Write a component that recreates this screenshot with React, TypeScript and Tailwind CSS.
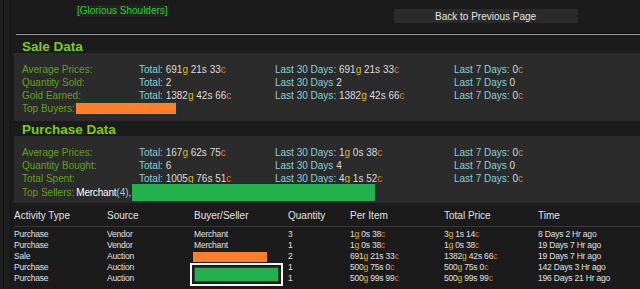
const FONT = "font-['Liberation_Sans',Arial,sans-serif]";

// "691g 21s 33c" -> coloured units
function Money({ v }: { v: string }) {
  return (
    <>
      {v.split(" ").map((tok, i) => {
        const unit = tok.slice(-1);
        const num = tok.slice(0, -1);
        const tone = unit === "g" ? "text-[#e6b50c]" : unit === "c" ? "text-[#d4803c]" : "";
        return (
          <span key={i}>
            {i > 0 && " "}
            {num}
            <span className={tone}>{unit}</span>
          </span>
        );
      })}
    </>
  );
}

type Stat = { label: string; total: React.ReactNode; d30: React.ReactNode; d7: React.ReactNode; sep?: boolean };

function StatRow({ label, total, d30, d7, sep = true }: Stat) {
  const k = sep ? ":" : "";
  return (
    <div className="grid h-[13px] grid-cols-[117px_136px_179px_1fr] items-center leading-[13px]">
      <span className="text-[#62a11c]">{label}</span>
      <span>
        <span className="text-[#86d2d8]">Total:</span> {total}
      </span>
      <span>
        <span className="text-[#86d2d8]">Last 30 Days{k}</span> {d30}
      </span>
      <span>
        <span className="text-[#86d2d8]">Last 7 Days{k}</span> {d7}
      </span>
    </div>
  );
}

const ROWS = [
  ["Purchase", "Vendor", "Merchant", "3", "1g 0s 38c", "3g 1s 14c", "8 Days 2 Hr ago"],
  ["Purchase", "Vendor", "Merchant", "1", "1g 0s 38c", "1g 0s 38c", "19 Days 7 Hr ago"],
  ["Sale", "Auction", "", "2", "691g 21s 33c", "1382g 42s 66c", "19 Days 7 Hr ago"],
  ["Purchase", "Auction", "", "1", "500g 75s 0c", "500g 75s 0c", "142 Days 3 Hr ago"],
  ["Purchase", "Auction", "", "1", "500g 99s 99c", "500g 99s 99c", "196 Days 21 Hr ago"],
];

const COLS = "grid grid-cols-[93px_87px_94px_62px_94px_94px_1fr]";

export default function App() {
  return (
    <div className={`flex h-[289px] w-[640px] overflow-hidden bg-[#1b1b1b] text-[#dcdcdc] ${FONT}`}>
      {/* left gutter */}
      <div className="flex w-[14px] shrink-0">
        <div className="w-[3px] bg-[#202020]" />
        <div className="w-px bg-[#101010]" />
        <div className="w-[6px] bg-[#1d1d1d]" />
        <div className="w-px bg-[#151515]" />
      </div>

      <div className="flex min-w-0 flex-1 flex-col">
        {/* top bar */}
        <div className="flex h-[33px] items-start">
          <div className="ml-[62px] mt-[5px] bg-[#232323] px-px text-[10px] leading-[12px] text-[#1fd51f]">
            [Glorious Shoulders]
          </div>
          <div className="ml-[225px] mt-[9px] flex h-[14px] w-[184px] items-center justify-center bg-[#2b2b2b] text-[10px] text-[#e4e4e4]">
            Back to Previous Page
          </div>
        </div>
        <div className="ml-[2px] h-px bg-[#070707]" />
        <div className="ml-[2px] h-px bg-[#9c9c9c]" />

        {/* sale data */}
        <div className="flex h-[18px] items-end pl-[8px] text-[13.5px] font-bold leading-[12px] text-[#7dcc12]">Sale Data</div>
        <div className="bg-[#2b2b2b] pb-[6px] pl-[8px] pt-[10px] text-[10px]">
          <StatRow label="Average Prices:" total={<Money v="691g 21s 33c" />} d30={<Money v="691g 21s 33c" />} d7={<Money v="0c" />} />
          <StatRow label="Quantity Sold:" total="2" d30="2" d7="0" sep={false} />
          <StatRow label="Gold Earned:" total={<Money v="1382g 42s 66c" />} d30={<Money v="1382g 42s 66c" />} d7={<Money v="0c" />} />
          <div className="flex h-[13px] items-center leading-[13px]">
            <span className="text-[#62a11c]">Top Buyers:</span>
            <span className="h-[13px] w-[102px] border border-[#1e3634] bg-[#fe7f27]" />
          </div>
        </div>

        {/* purchase data */}
        <div className="flex h-[15px] items-end pl-[8px] text-[13.5px] font-bold leading-[12px] text-[#7dcc12]">Purchase Data</div>
        <div className="bg-[#2b2b2b] pb-[1px] pl-[8px] pt-[10px] text-[10px]">
          <StatRow label="Average Prices:" total={<Money v="167g 62s 75c" />} d30={<Money v="1g 0s 38c" />} d7={<Money v="0c" />} />
          <StatRow label="Quantity Bought:" total="6" d30="4" d7="0" sep={false} />
          <StatRow label="Total Spent:" total={<Money v="1005g 76s 51c" />} d30={<Money v="4g 1s 52c" />} d7={<Money v="0c" />} />
          <div className="-mt-[2px] flex h-[19px] items-center">
            <span className="text-[#62a11c]">Top Sellers:</span>
            <span className="ml-[2px] tracking-[-0.2px] text-white">Merchant</span>
            <span className="text-[#86d2d8]">(4)</span>
            <span>,</span>
            <span className="h-[19px] w-[245px] border border-[#2a2034] bg-[#22b14c]" />
          </div>
        </div>

        {/* activity table */}
        <div className={`${COLS} h-[23px] items-center pt-[1px] text-[10px] text-[#e2e2e2]`}>
          <span>Activity Type</span>
          <span>Source</span>
          <span>Buyer/Seller</span>
          <span>Quantity</span>
          <span>Per Item</span>
          <span>Total Price</span>
          <span>Time</span>
        </div>
        <div className="h-px bg-[#383838]" />
        <div className="relative pt-[2px] text-[8.5px] tracking-[-0.2px] text-[#e0e0e0]">
          {ROWS.map((r, i) => (
            <div key={i} className={`${COLS} h-[11px] items-center leading-[11px]`}>
              <span>{r[0]}</span>
              <span>{r[1]}</span>
              <span>
                {r[2]}
                {i === 2 && <span className="-ml-px block h-[10px] w-[74px] bg-[#fe7f27]" />}
              </span>
              <span>{r[3]}</span>
              <span>
                <Money v={r[4]} />
              </span>
              <span>
                <Money v={r[5]} />
              </span>
              <span>{r[6]}</span>
            </div>
          ))}
          {/* highlighted seller box, overlays rows 4-5 */}
          <div className="absolute left-[176px] top-[36px] h-[23px] w-[93px] border-2 border-[#f4f4f4] bg-[#1b1b1b] p-[2px]">
            <div className="h-full w-full border border-[#18502c] bg-[#22b14c]" />
          </div>
        </div>
      </div>
    </div>
  );
}
